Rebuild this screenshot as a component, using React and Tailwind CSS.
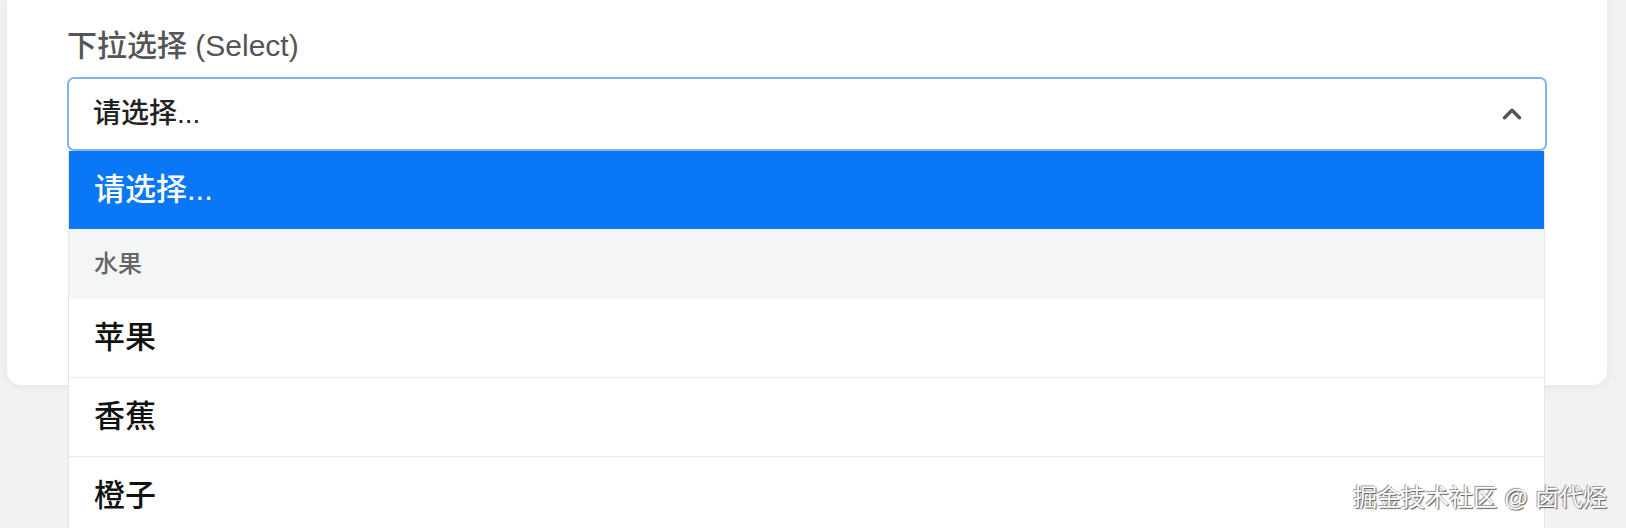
import { ChevronUp } from "lucide-react";

const font = {
  fontFamily: '"Liberation Sans", "Noto Sans CJK SC", sans-serif',
};

const options = [
  { label: "请选择...", active: true },
  { label: "水果", group: true },
  { label: "苹果" },
  { label: "香蕉" },
  { label: "橙子" },
];

export default function App() {
  return (
    <div
      className="relative h-[528px] w-full overflow-hidden bg-[#f2f2f4] pl-[7px] pr-[19px]"
      style={font}
    >
      <div className="h-[385px] rounded-b-[14px] bg-white px-[60px] pt-[26px] shadow-[0_2px_10px_rgba(0,0,0,0.06)]">
        <label className="block text-[30px] font-medium leading-[40px] text-[#555]">
          下拉选择 (Select)
        </label>

        <div className="relative mt-[11px]">
          <div className="flex h-[74px] items-center justify-between rounded-[7px] border-2 border-[#86b3ee] bg-white pl-[24px] pr-[18px]">
            <span className="text-[28px] font-medium leading-none text-[#222]">请选择...</span>
            <ChevronUp className="h-[30px] w-[30px] text-[#555]" strokeWidth={2.8} />
          </div>

          {/* dropdown list */}
          <ul className="absolute left-[1px] right-[2px] top-[74px] z-10 border-x border-[#e6e6e6] bg-white">
            {options.map((o) =>
              o.group ? (
                <li
                  key={o.label}
                  className="flex h-[70px] items-center bg-[#f4f5f6] px-[25px] text-[24px] font-medium text-[#666]"
                >
                  {o.label}
                </li>
              ) : (
                <li
                  key={o.label}
                  className={
                    o.active
                      ? "flex h-[78px] items-center bg-[#0a78f6] px-[25px] text-[31px] font-medium text-white"
                      : "flex h-[79px] items-center border-b border-[#ececec] px-[25px] text-[31px] font-medium text-[#111]"
                  }
                >
                  {o.label}
                </li>
              )
            )}
          </ul>
        </div>
      </div>

      <div
        className="absolute bottom-[18px] right-[19px] z-20 text-[24px] leading-none text-white"
        style={{ textShadow: "1px 1px 1px #555, -1px -1px 1px #999" }}
      >
        掘金技术社区 @ 卤代烃
      </div>
    </div>
  );
}
